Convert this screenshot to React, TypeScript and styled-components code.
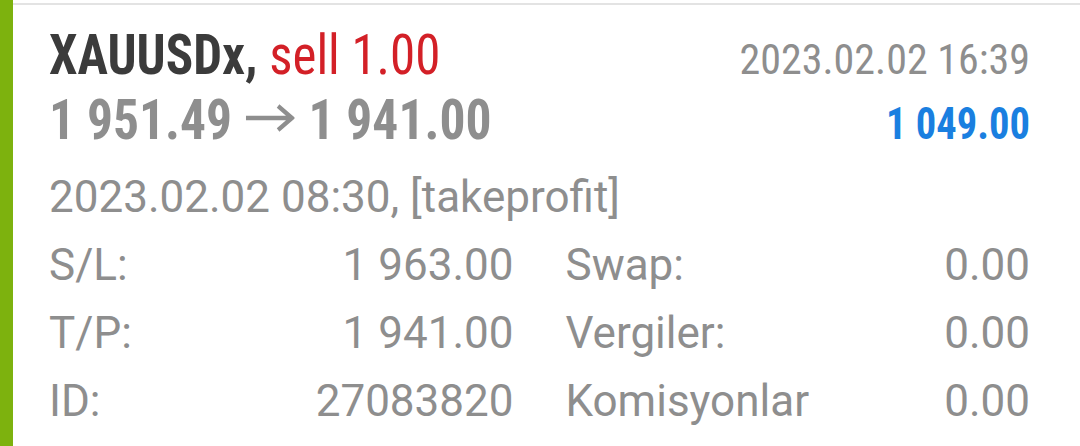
import React from "react";
import styled, { createGlobalStyle } from "styled-components";

const GlobalStyle = createGlobalStyle`
  html, body {
    margin: 0;
    padding: 0;
    background: #ffffff;
  }
  body {
    font-family: Roboto, "Liberation Sans", sans-serif;
  }
`;

const color = {
  bar: "#7db20e",
  line: "#e3e3e3",
  dark: "#3b3b3b",
  gray: "#8e8e8e",
  red: "#d32027",
  blue: "#1a7fe0",
};

const Narrow = styled.span<{ $scale: number; $origin?: "left" | "right" }>`
  display: inline-flex;
  align-items: baseline;
  white-space: nowrap;
  transform: scaleX(${(p) => p.$scale});
  transform-origin: ${(p) => p.$origin ?? "left"} center;
`;

const Card = styled.div`
  display: flex;
  width: 1080px;
  height: 446px;
  overflow: hidden;
`;

const Bar = styled.div`
  width: 13px;
  flex-shrink: 0;
  background: ${color.bar};
`;

const Body = styled.div`
  flex: 1;
  padding-top: 3px;
`;

const Inner = styled.div`
  border-top: 2px solid ${color.line};
  padding: 20px 50px 0 36px;
`;

const HeadRow = styled.div`
  display: flex;
  justify-content: space-between;
  align-items: baseline;
  line-height: 60px;
`;

const Header = styled.div`
  margin-bottom: 9px;
`;

const Symbol = styled.span`
  font-family: "Roboto Condensed", Roboto, sans-serif;
  font-weight: 700;
  font-size: 56px;
  color: ${color.dark};
  white-space: pre;
`;

const Side = styled.span`
  font-weight: 400;
  color: ${color.red};
`;

const Prices = styled.span`
  display: inline-flex;
  align-items: center;
  gap: 15px;
  font-family: "Roboto Condensed", Roboto, sans-serif;
  font-weight: 700;
  font-size: 56px;
  color: ${color.gray};
`;

const ArrowIcon = styled.svg`
  width: 53px;
  height: 28px;
  margin-top: -4px;
`;

const Time = styled.span`
  font-family: "Roboto Condensed", Roboto, sans-serif;
  font-size: 42px;
  color: ${color.gray};
`;

const Profit = styled.span<{ $positive: boolean }>`
  font-family: "Roboto Condensed", Roboto, sans-serif;
  font-weight: 700;
  font-size: 45px;
  color: ${(p) => (p.$positive ? color.blue : color.red)};
`;

const Comment = styled.div`
  font-size: 44px;
  line-height: 68px;
  color: ${color.gray};
`;

const Details = styled.div`
  display: grid;
  grid-template-columns: 1fr 1fr;
  column-gap: 52px;
`;

const Field = styled.div`
  display: flex;
  justify-content: space-between;
  font-size: 44px;
  line-height: 68px;
  color: ${color.gray};
`;

const Arrow = () => (
  <ArrowIcon viewBox="0 0 53 28">
    <path
      d="M0 14 H50 M35 2 L50 14 L35 26"
      fill="none"
      stroke="currentColor"
      strokeWidth="4.5"
    />
  </ArrowIcon>
);

const deal = {
  symbol: "XAUUSDx",
  side: "sell 1.00",
  open: "1 951.49",
  close: "1 941.00",
  time: "2023.02.02 16:39",
  profit: "1 049.00",
  comment: "2023.02.02 08:30, [takeprofit]",
};

const fields: [string, string][] = [
  ["S/L:", "1 963.00"],
  ["Swap:", "0.00"],
  ["T/P:", "1 941.00"],
  ["Vergiler:", "0.00"],
  ["ID:", "27083820"],
  ["Komisyonlar", "0.00"],
];

export default function App() {
  return (
    <>
      <GlobalStyle />
      <Card>
        <Bar />
        <Body>
          <Inner>
            <Header>
              <HeadRow>
                <Narrow $scale={0.91}>
                  <Symbol>
                    {deal.symbol}, <Side>{deal.side}</Side>
                  </Symbol>
                </Narrow>
                <Time>{deal.time}</Time>
              </HeadRow>
              <HeadRow>
                <Narrow $scale={0.92}>
                  <Prices>
                    <span>{deal.open}</span>
                    <Arrow />
                    <span>{deal.close}</span>
                  </Prices>
                </Narrow>
                <Narrow $scale={0.9} $origin="right">
                  <Profit $positive>{deal.profit}</Profit>
                </Narrow>
              </HeadRow>
            </Header>
            <Comment>{deal.comment}</Comment>
            <Details>
              {fields.map(([label, value]) => (
                <Field key={label}>
                  <span>{label}</span>
                  <span>{value}</span>
                </Field>
              ))}
            </Details>
          </Inner>
        </Body>
      </Card>
    </>
  );
}
